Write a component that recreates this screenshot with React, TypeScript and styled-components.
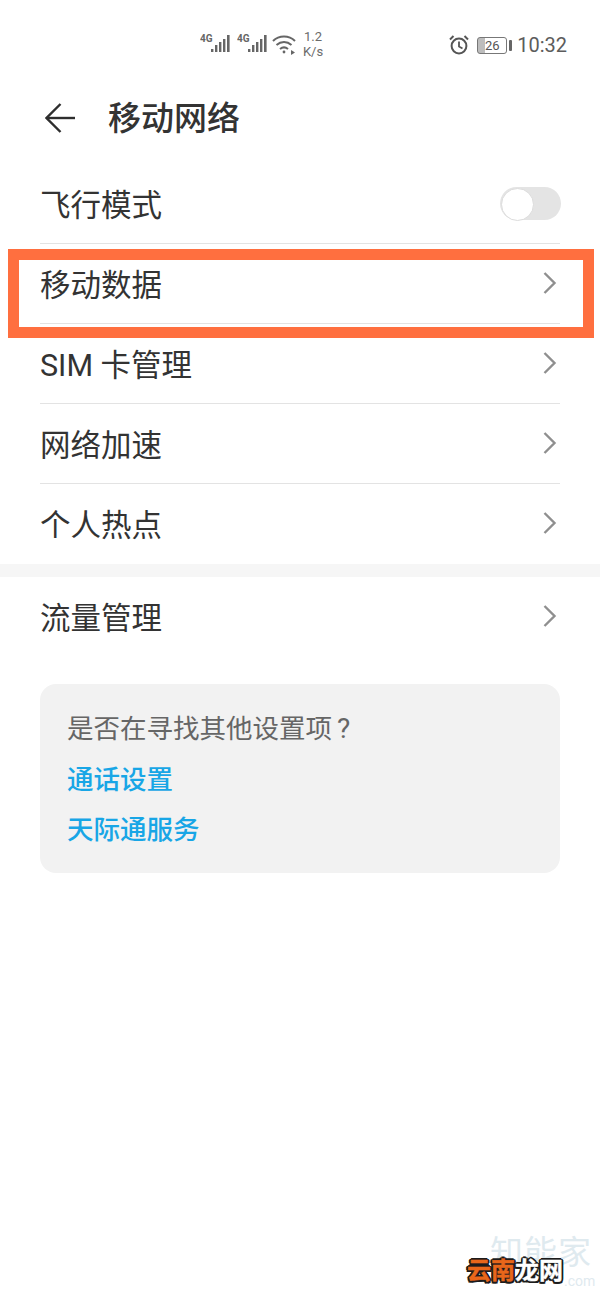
import styled, { createGlobalStyle } from "styled-components";

const CJK = `"Roboto", "Noto Sans CJK SC", sans-serif`;

const GlobalStyle = createGlobalStyle`
  html, body {
    margin: 0;
    padding: 0;
    background: #fff;
  }
  * {
    box-sizing: border-box;
  }
`;

const Page = styled.div`
  position: relative;
  width: 600px;
  height: 1300px;
  overflow: hidden;
  background: #fff;
  font-family: ${CJK};
  color: #2b2b2b;
`;

const StatusBar = styled.div`
  display: flex;
  align-items: center;
  height: 88px;
  padding: 0 33px 0 200px;
  color: #5a5a5a;
`;

const Signal = styled.svg`
  display: block;
  margin-right: 5px;
`;

const WifiWrap = styled.svg`
  display: block;
  margin-left: -2px;
`;

const Speed = styled.div`
  width: 26px;
  margin-left: 2px;
  font-size: 13px;
  line-height: 15px;
  text-align: center;
  color: #6b6b6b;
`;

const StatusRight = styled.div`
  display: flex;
  align-items: center;
  margin-left: auto;
  padding-top: 2px;
`;

const Battery = styled.div`
  position: relative;
  width: 30px;
  height: 17px;
  margin-left: 8px;
  margin-right: 1px;
  border: 1px solid #777;
  border-radius: 3px;
  font-size: 13px;
  line-height: 15px;
  text-align: center;
  color: #555;
  background: linear-gradient(90deg, #bdbdbd 26%, #fff 26%);

  &::after {
    content: "";
    position: absolute;
    top: 2px;
    right: -6px;
    width: 3px;
    height: 11px;
    background: #666;
    border-radius: 1px;
  }
`;

const Clock = styled.span`
  margin-left: 9px;
  font-size: 20px;
  line-height: 24px;
  color: #5c5c5c;
`;

const Header = styled.header`
  display: flex;
  align-items: center;
  height: 60px;
  padding-left: 45px;
`;

const Title = styled.h1`
  margin: 2px 0 0 33px;
  font-size: 33px;
  font-weight: 500;
  line-height: 44px;
  color: #333;
`;

const List = styled.div`
  padding: 16px 40px 0;
`;

const Row = styled.div<{ $last?: boolean }>`
  display: flex;
  align-items: center;
  justify-content: space-between;
  height: 80px;
  padding-right: 3px;
  padding-bottom: ${(p) => (p.$last ? "3px" : "2px")};
  border-bottom: ${(p) => (p.$last ? "none" : "1px solid #e3e3e3")};
  font-size: 30.5px;
  color: #333;
`;

const Band = styled.div`
  height: 13px;
  background: #f6f6f6;
`;

const SingleList = styled.div`
  padding: 0 40px;
`;

const Toggle = styled.div`
  position: relative;
  width: 61px;
  height: 33px;
  margin: 2px -4px 0 0;
  border-radius: 17px;
  background: #e4e4e4;

  &::before {
    content: "";
    position: absolute;
    top: 1px;
    left: 1px;
    width: 31px;
    height: 31px;
    border: 1px solid #dcdcdc;
    border-radius: 50%;
    background: #fff;
  }
`;

const HintCard = styled.section`
  display: flex;
  flex-direction: column;
  gap: 12.5px;
  margin: 27px 40px 0;
  height: 189px;
  padding: 26px 27px;
  border-radius: 16px;
  background: #f2f2f2;
  font-size: 26.5px;
  line-height: 38px;
`;

const HintTitle = styled.div`
  color: #666;
`;

const HintMark = styled.span`
  margin-left: 5px;
  font-size: 28px;
`;

const HintLink = styled.a`
  color: #18a6e6;
  font-weight: 500;
  text-decoration: none;
`;

const Highlight = styled.div`
  position: absolute;
  left: 8px;
  top: 249px;
  width: 586px;
  height: 89px;
  border: 11px solid #ff6f3f;
  pointer-events: none;
`;

const Watermark = styled.div`
  position: absolute;
  left: 490px;
  top: 1235px;
  font-size: 33px;
  line-height: 36px;
  letter-spacing: 1px;
  color: #dfeaef;
  white-space: nowrap;
`;

const WatermarkSub = styled.div`
  position: absolute;
  left: 564px;
  top: 1273px;
  font-size: 14px;
  line-height: 16px;
  color: #dfeaef;
`;

const Badge = styled.div`
  position: absolute;
  left: 467px;
  top: 1256px;
  display: flex;
  font-size: 24px;
  font-weight: 700;
  line-height: 30px;
  white-space: nowrap;
`;

const BadgePart = styled.span<{ $orange?: boolean }>`
  color: ${(p) => (p.$orange ? "#e8661a" : "#fff")};
  -webkit-text-stroke: 0.4px ${(p) => (p.$orange ? "#e8661a" : "#fff")};
  text-shadow:
    -2px 0 0 #1c1c1c,
    2px 0 0 #1c1c1c,
    0 -2px 0 #1c1c1c,
    0 2px 0 #1c1c1c,
    -1.5px -1.5px 0 #1c1c1c,
    1.5px -1.5px 0 #1c1c1c,
    -1.5px 1.5px 0 #1c1c1c,
    1.5px 1.5px 0 #1c1c1c;
`;

function SignalIcon() {
  return (
    <Signal width="32" height="24" viewBox="0 0 32 24">
      <text x="0" y="10" fontSize="10" fontWeight="700" fontFamily="Roboto, sans-serif" fill="#666">
        4G
      </text>
      <g fill="#666">
        <rect x="11" y="17" width="2.4" height="3" />
        <rect x="15" y="13" width="2.4" height="7" />
        <rect x="19" y="10" width="2.4" height="10" />
        <rect x="23" y="7" width="2.4" height="13" />
        <rect x="27" y="3" width="2.6" height="17" />
      </g>
    </Signal>
  );
}

function WifiIcon() {
  return (
    <WifiWrap width="26" height="24" viewBox="0 0 26 24" fill="none" stroke="#666" strokeWidth="2">
      <path d="M1 9 C7 3 17 3 23 9" />
      <path d="M4.5 13 C9 9 15 9 19.5 13" />
      <path d="M8 17 C10.5 15 13.5 15 16 17" />
      <circle cx="12" cy="20" r="1.4" fill="#666" stroke="none" />
      <path d="M19 18 l4 2.5 l-4 2.5z" fill="#666" stroke="none" />
    </WifiWrap>
  );
}

function AlarmIcon() {
  return (
    <svg width="20" height="22" viewBox="0 0 20 22" fill="none" stroke="#555" strokeWidth="2">
      <circle cx="10" cy="12" r="7.4" />
      <path d="M10 7.5 V12.5 L13.5 14.5" strokeWidth="1.8" />
      <path d="M1 5.5 L4.5 2" />
      <path d="M19 5.5 L15.5 2" />
    </svg>
  );
}

function BackIcon() {
  return (
    <svg width="30" height="30" viewBox="0 0 30 30" fill="none" stroke="#2e2e2e" strokeWidth="2.4">
      <path d="M30 15 H2" />
      <path d="M15.5 1 L1.5 15 L15.5 29" />
    </svg>
  );
}

function Chevron() {
  return (
    <svg width="14" height="22" viewBox="0 0 14 22" fill="none" stroke="#8f8f8f" strokeWidth="2.4">
      <path d="M1.5 1 L11.5 11 L1.5 21" />
    </svg>
  );
}

const rows = ["移动数据", "SIM 卡管理", "网络加速", "个人热点"];

export default function App() {
  return (
    <Page>
      <GlobalStyle />
      <StatusBar>
        <SignalIcon />
        <SignalIcon />
        <WifiIcon />
        <Speed>
          1.2
          <br />
          K/s
        </Speed>
        <StatusRight>
          <AlarmIcon />
          <Battery>26</Battery>
          <Clock>10:32</Clock>
        </StatusRight>
      </StatusBar>
      <Header>
        <BackIcon />
        <Title>移动网络</Title>
      </Header>
      <List>
        <Row>
          飞行模式
          <Toggle />
        </Row>
        {rows.map((label, i) => (
          <Row key={label} $last={i === rows.length - 1}>
            {label}
            <Chevron />
          </Row>
        ))}
      </List>
      <Band />
      <SingleList>
        <Row $last>
          流量管理
          <Chevron />
        </Row>
      </SingleList>
      <HintCard>
        <HintTitle>
          是否在寻找其他设置项<HintMark>?</HintMark>
        </HintTitle>
        <HintLink>通话设置</HintLink>
        <HintLink>天际通服务</HintLink>
      </HintCard>
      <Highlight />
      <Watermark>知能家</Watermark>
      <WatermarkSub>.com</WatermarkSub>
      <Badge>
        <BadgePart $orange>云南</BadgePart>
        <BadgePart>龙网</BadgePart>
      </Badge>
    </Page>
  );
}
